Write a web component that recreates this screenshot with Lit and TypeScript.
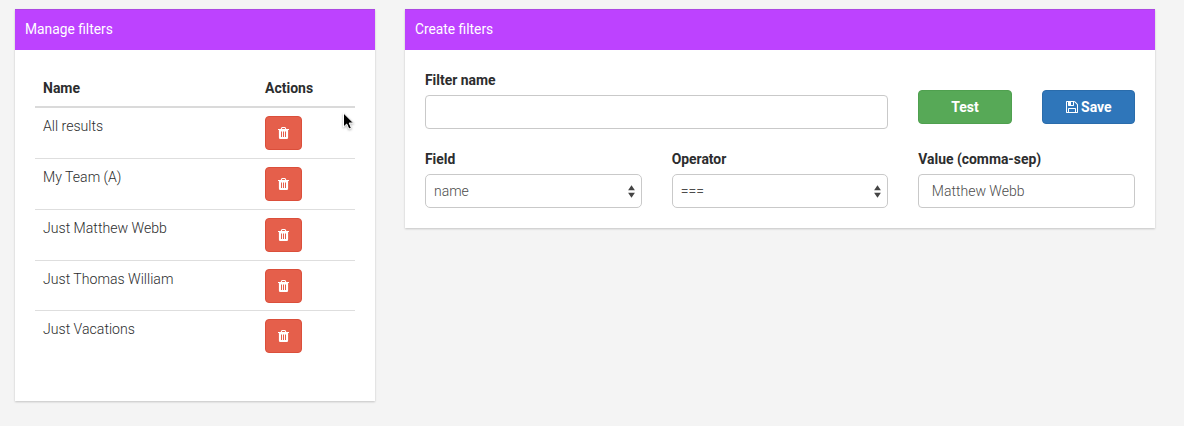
import { LitElement, html, svg, css } from "lit";
import { customElement } from "lit/decorators.js";

const trash = html`<svg class="trash" viewBox="0 0 11 12">
  ${svg`<path fill-rule="evenodd" d="M0 1.900h2.700L3.300.6Q3.600 0 4.300 0h2.400q.7 0 1 .6l.6 1.300H11v1.100h-.9v7.500q0 1.500-1.300 1.500H2.200Q.9 12 .9 10.500V3H0zM3.900 1.900h3.200L6.700 1H4.300zM3 4.500v5.500h1V4.500zM5 4.500v5.500h1V4.500zM7 4.500v5.500h1V4.500z"/>`}
</svg>`;

const floppy = html`<svg class="icon" viewBox="0 0 1792 1792">
  ${svg`<path d="M512 1536h768v-384h-768v384zm896 0h128v-896q0-14-10-38.500t-20-34.500l-281-281q-10-10-34-20t-39-10v416q0 40-28 68t-68 28h-576q-40 0-68-28t-28-68v-416h-128v1280h128v-416q0-40 28-68t68-28h832q40 0 68 28t28 68v416zm-384-928v-320q0-13-9.500-22.500t-22.500-9.500h-192q-13 0-22.500 9.500t-9.500 22.500v320q0 13 9.500 22.500t22.500 9.500h192q13 0 22.500-9.500t9.500-22.500zm640 32v928q0 40-28 68t-68 28h-1344q-40 0-68-28t-28-68v-1344q0-40 28-68t68-28h928q40 0 88 20t76 48l280 280q28 28 48 76t20 88z"/>`}
</svg>`;

const arrows = html`<svg class="arrows" viewBox="0 0 7 13">
  ${svg`<path d="M3.500 0.300L6.900 5.300H.1zM3.500 12.700L.1 7.700h6.800z"/>`}
</svg>`;

@customElement("app-root")
export class AppRoot extends LitElement {
  static styles = css`
    :host {
      display: flex;
      align-items: flex-start;
      gap: 30px;
      box-sizing: border-box;
      height: 426px;
      padding: 9px 29px 0 15px;
      background: #f4f4f4;
      color: #2c2d2e;
      font: 300 14.1px/21px Roboto, sans-serif;
      position: relative;
      overflow: hidden;
    }
    * { box-sizing: border-box; }
    .panel {
      background: #fff;
      box-shadow: 0 1px 2px rgba(0, 0, 0, 0.2);
    }
    .manage { width: 360px; height: 392px; }
    .create { width: 750px; height: 219px; }
    .title {
      height: 41px;
      padding: 9px 10px;
      background: #bd42ff;
      border-top: 1px solid #ac48e2;
      color: #fff;
      font-size: 13.800px;
      font-weight: 400;
    }
    .table { padding: 20px 20px 0; }
    .row {
      display: grid;
      grid-template-columns: 222px 1fr;
      padding: 8px;
      height: 50.850px;
      border-bottom: 1px solid #dedede;
    }
    .row:last-child { border-bottom: 0; }
    .head {
      height: 38px;
      border-bottom: 2px solid #dadada;
      font-size: 14px;
      font-weight: 700;
    }
    .btn {
      display: flex;
      align-items: center;
      justify-content: center;
      gap: 2px;
      height: 34px;
      padding: 1px 0 0;
      border: 1px solid;
      border-radius: 4px;
      color: #fff;
      font: 700 14px/21px Roboto, sans-serif;
    }
    .danger { width: 37px; padding: 0; background: #e55f4b; border-color: #db4f3b; }
    .test { background: #57a957; border-color: #4fa04f; }
    .save { background: #2f76ba; border-color: #2a6cab; }
    .icon { width: 14px; height: 14px; fill: currentColor; display: block; margin-top: -1px; }
    .trash { width: 11px; height: 12px; fill: currentColor; display: block; }
    .form { padding: 20px; display: grid; gap: 20px; }
    .line { display: grid; column-gap: 30px; }
    .top { grid-template-columns: 463.300px 1fr 1fr; }
    .top .btn { margin-top: 20px; }
    .bottom { grid-template-columns: repeat(3, 1fr); }
    .label { display: block; margin-bottom: 4px; font-size: 13.900px; font-weight: 700; }
    .control {
      display: flex;
      align-items: center;
      justify-content: space-between;
      height: 34px;
      padding: 1px 12px 0 12.500px;
      border: 1px solid #c9c9c9;
      border-radius: 4px;
      color: #4c4c4c;
      background: #fff;
      font-size: 14px;
    }
    .select { padding: 1px 6px 0 8px; border-radius: 5px; }
    .arrows { width: 7px; height: 13px; fill: #444; margin-top: -1px; }
    .pointer {
      position: absolute;
      left: 342px;
      top: 112px;
      width: 13px;
      height: 19px;
      filter: drop-shadow(0 1px 1px rgba(0, 0, 0, 0.3));
    }
  `;

  private filters = ["All results", "My Team (A)", "Just Matthew Webb", "Just Thomas William", "Just Vacations"];

  render() {
    return html`
      <section class="panel manage">
        <div class="title">Manage filters</div>
        <div class="table">
          <div class="row head"><span>Name</span><span>Actions</span></div>
          ${this.filters.map(
            (name) => html`<div class="row">
              <span>${name}</span>
              <button class="btn danger" aria-label="Delete">${trash}</button>
            </div>`
          )}
        </div>
      </section>
      <section class="panel create">
        <div class="title">Create filters</div>
        <div class="form">
          <div class="line top">
            <div><span class="label">Filter name</span><div class="control"></div></div>
            <button class="btn test">Test</button>
            <button class="btn save">${floppy}<span>Save</span></button>
          </div>
          <div class="line bottom">
            <div><span class="label">Field</span><div class="control select"><span>name</span>${arrows}</div></div>
            <div><span class="label">Operator</span><div class="control select"><span>===</span>${arrows}</div></div>
            <div><span class="label">Value (comma-sep)</span><div class="control"><span>Matthew Webb</span></div></div>
          </div>
        </div>
      </section>
      <svg class="pointer" viewBox="0 0 13 19">
        <path d="M1.500 1v14l3.200-3 2.200 5 2.500-1-2.200-5h4.300z" fill="#000" stroke="#fff" stroke-width="1"/>
      </svg>
    `;
  }
}
